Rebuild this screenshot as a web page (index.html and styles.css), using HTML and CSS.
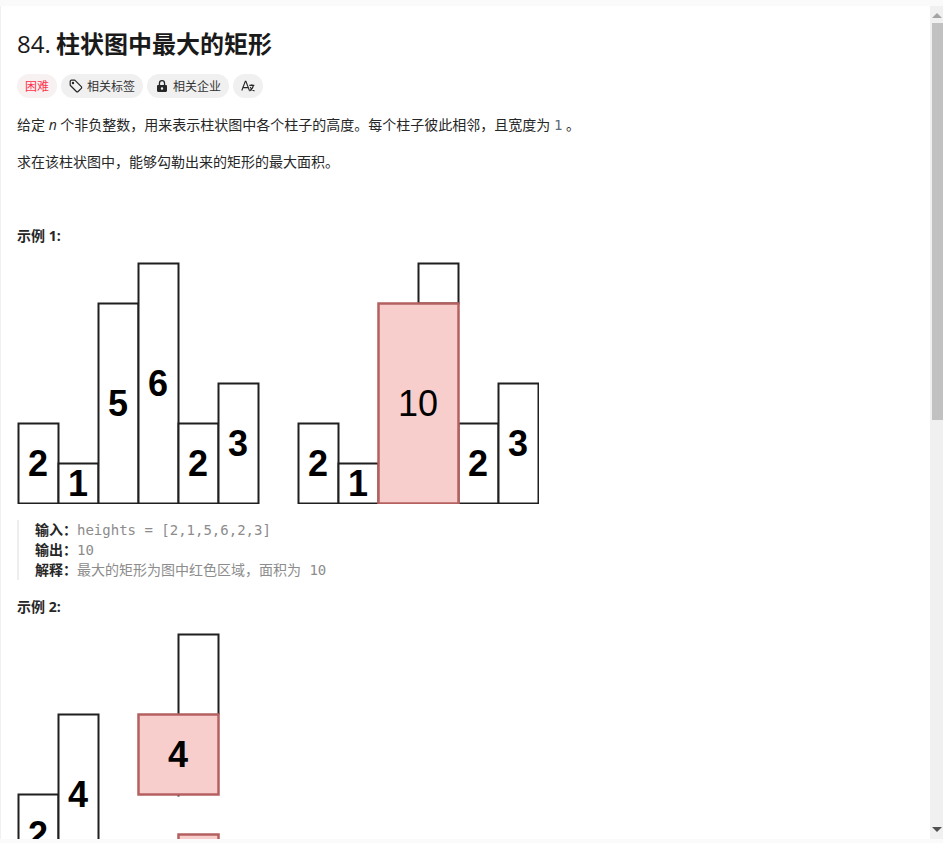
FILE: index.html
```html
<!DOCTYPE html>
<html lang="zh-CN">
<head>
<meta charset="UTF-8" />
<meta name="viewport" content="width=device-width, initial-scale=1" />
<title>84. 柱状图中最大的矩形</title>
<link rel="stylesheet" href="styles.css">
</head>
<body>
  <div class="shell">
    <main class="panel">
      <h1 class="title">84. <b>柱状图中最大的矩形</b></h1>

      <div class="tags">
        <span class="tag tag-hard">困难</span>
        <span class="tag">
          <svg class="tag-icon" viewBox="0 0 14 14" fill="none" stroke="#262626" stroke-width="1.2" stroke-linejoin="round">
            <path d="M1.2 2.4a1.2 1.2 0 0 1 1.2-1.2h3.1c.3 0 .6.1.8.4l6 6a1.2 1.2 0 0 1 0 1.7l-3.2 3.2a1.2 1.2 0 0 1-1.7 0l-6-6a1.2 1.2 0 0 1-.2-.8z"/>
            <circle cx="4" cy="4" r=".6" fill="#262626"/>
          </svg>
          相关标签
        </span>
        <span class="tag">
          <svg class="tag-icon" viewBox="0 0 14 14" fill="#262626">
            <path d="M7 1a3.2 3.2 0 0 0-3.2 3.2V6H3.2C2.5 6 2 6.500 2 7.200v4.600C2 12.500 2.500 13 3.200 13h7.600c.7 0 1.200-.5 1.200-1.200V7.200C12 6.500 11.500 6 10.800 6h-.6V4.200A3.200 3.200 0 0 0 7 1zm1.900 5H5.100V4.200a1.900 1.900 0 0 1 3.800 0zM7 8.300a1.200 1.200 0 1 1 0 2.400 1.200 1.200 0 0 1 0-2.400z" fill-rule="evenodd"/>
          </svg>
          相关企业
        </span>
        <span class="tag">
          <svg class="tag-icon" viewBox="0 0 14 14" fill="none" stroke="#262626" stroke-width="1.1">
            <path d="M.8 11.500 4.300 2.200h.6l3.500 9.300M2 8.600h5.200"/>
            <path d="M8.300 6.400h5M10.800 5.200v1.200M12.400 6.400c-.5 2.600-2 4.600-4 5.600M9.200 8c.7 1.800 2.200 3.300 4.300 4"/>
          </svg>
        </span>
      </div>

      <p class="desc">给定 <em>n</em> 个非负整数，用来表示柱状图中各个柱子的高度。每个柱子彼此相邻，且宽度为 <code>1</code> 。</p>
      <p class="desc desc-next">求在该柱状图中，能够勾勒出来的矩形的最大面积。</p>

      <p class="example-title example-first"><strong>示例 1:</strong></p>
      <svg class="chart" width="522" height="242" viewBox="-0.5 -0.5 522 242">
        <g class="bars">
          <rect x="1" y="161" width="40" height="80"/>
          <rect x="41" y="201" width="40" height="40"/>
          <rect x="81" y="41" width="40" height="200"/>
          <rect x="121" y="1" width="40" height="240"/>
          <rect x="161" y="161" width="40" height="80"/>
          <rect x="201" y="121" width="40" height="120"/>

          <rect x="281" y="161" width="40" height="80"/>
          <rect x="321" y="201" width="40" height="40"/>
          <rect x="401" y="1" width="40" height="40"/>
          <rect x="441" y="161" width="40" height="80"/>
          <rect x="481" y="121" width="40" height="120"/>
        </g>
        <rect class="area" x="361" y="41" width="80" height="200"/>
        <g class="nums">
          <text x="20.500" y="213">2</text>
          <text x="60.500" y="233">1</text>
          <text x="100.500" y="153">5</text>
          <text x="140.500" y="133">6</text>
          <text x="180.500" y="213">2</text>
          <text x="220.500" y="193">3</text>

          <text x="300.500" y="213">2</text>
          <text x="340.500" y="233">1</text>
          <text class="thin" x="400.500" y="153">10</text>
          <text x="460.500" y="213">2</text>
          <text x="500.500" y="193">3</text>
        </g>
      </svg>

      <pre class="io"><strong>输入：</strong>heights = [2,1,5,6,2,3]
<strong>输出：</strong>10
<strong>解释：</strong>最大的矩形为图中红色区域，面积为 10</pre>

      <p class="example-title"><strong>示例 2:</strong></p>
      <svg class="chart" width="522" height="242" viewBox="-0.5 -0.5 522 242">
        <g class="bars">
          <rect x="1" y="161" width="40" height="80"/>
          <rect x="41" y="81" width="40" height="160"/>
          <path d="M161 81V1h40v80"/>
          <path d="M161 161v2"/>
        </g>
        <rect class="area" x="121" y="81" width="80" height="80"/>
        <rect class="area" x="161" y="201" width="40" height="40"/>
        <g class="nums">
          <text x="20.500" y="213">2</text>
          <text x="60.500" y="173">4</text>
          <text x="160.500" y="133">4</text>
        </g>
      </svg>
    </main>

    <div class="scrollbar">
      <div class="arrow-up"></div>
      <div class="thumb"></div>
      <div class="arrow-down"></div>
    </div>
  </div>
</body>
</html>
```

FILE: styles.css
```css
html, body {
  height: 100%;
  margin: 0;
  overflow: hidden;
}
body {
  background: #fafafa;
  color: #262626;
  font-family: "Open Sans", "Noto Sans CJK SC", sans-serif;
  font-size: 14px;
}
.shell {
  display: flex;
  height: 833px;
  margin-top: 6px;
}
.panel {
  flex: 1;
  min-width: 0;
  overflow: hidden;
  background: white;
  border-left: 1px solid #f0f0f0;
  padding: 22px 16px 0;
}
.title {
  margin: 0;
  font-size: 24px;
  font-weight: 500;
  line-height: 32px;
  word-spacing: -1px;
  color: #1a1a1a;
}
.title b {
  font-weight: 700;
}
.tags {
  display: flex;
  gap: 4px;
  margin-top: 14px;
}
.tag {
  display: flex;
  align-items: center;
  gap: 4px;
  height: 24px;
  padding: 0 8px;
  border-radius: 12px;
  background: #f0f0f0;
  font-size: 12px;
  color: #333;
}
.tag-hard {
  background: #f7f1f2;
  color: #ff334b;
}
.tag-icon {
  width: 14px;
  height: 14px;
}
.desc {
  margin: 16px 0 0;
  line-height: 21px;
}
.desc-next {
  margin-top: 15px;
}
.desc em {
  font-style: italic;
}
.desc code {
  font-family: "DejaVu Sans Mono", monospace;
  color: #5c6b7a;
}
.example-title {
  margin: 17px 0 0;
  font-size: 14px;
  line-height: 20px;
}
.example-first {
  margin-top: 54px;
}
.chart {
  display: block;
  margin-top: 16px;
}
.bars rect,
.bars path {
  fill: white;
  stroke: #1f1f1f;
  stroke-width: 2;
}
.bars path {
  fill: none;
}
.area {
  fill: #f8cecc;
  stroke: #b46060;
  stroke-width: 2.5;
}
.nums text {
  font-family: "Liberation Sans", Arial, sans-serif;
  font-size: 36px;
  font-weight: 700;
  text-anchor: middle;
  fill: #000;
}
.nums .thin {
  font-weight: 400;
}
.io {
  margin: 16px 0 0;
  padding-left: 16px;
  border-left: 2px solid #eee;
  font-family: "DejaVu Sans Mono", "Noto Sans CJK SC", monospace;
  font-size: 14px;
  line-height: 20px;
  color: #8c8c8c;
}
.io strong {
  font-family: "Open Sans", "Noto Sans CJK SC", sans-serif;
  color: #262626;
}
.scrollbar {
  display: flex;
  flex-direction: column;
  align-items: flex-end;
  flex: none;
  width: 13px;
  background: #f0f0f0;
}
.arrow-up,
.arrow-down {
  width: 0;
  height: 0;
  margin-right: 1px;
  border-left: 5px solid transparent;
  border-right: 5px solid transparent;
}
.arrow-up {
  margin-top: 7px;
  border-bottom: 5px solid #a3a3a3;
}
.thumb {
  width: 11px;
  height: 397px;
  margin-top: 5px;
  background: #c1c1c1;
}
.arrow-down {
  margin-top: auto;
  margin-bottom: 7px;
  border-top: 5px solid #505050;
}
```
